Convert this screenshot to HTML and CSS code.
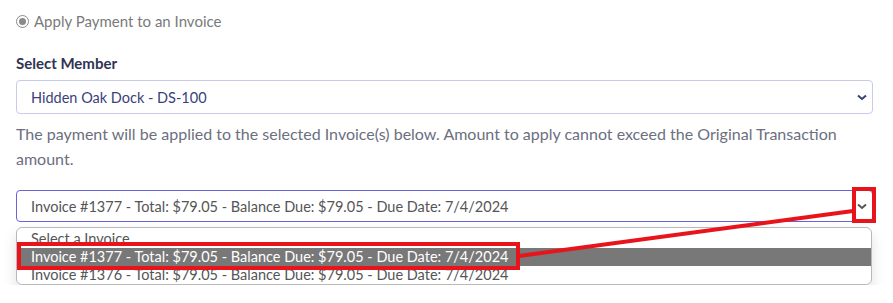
FILE: index.html
```html
<!DOCTYPE html>
<html lang="en">
<head>
    <meta charset="UTF-8">
    <title>Apply Payment</title>
    <link rel="stylesheet" href="styles.css">
</head>
<body>
    <div class="page">
        <!-- payment mode -->
        <label class="radio-row">
            <span class="radio"><span class="radio-dot"></span></span>
            Apply Payment to an Invoice
        </label>

        <div class="field-label">Select Member</div>
        <div class="select member-select">
            <span>Hidden Oak Dock - DS-100</span>
            <svg class="chev" width="10" height="7" viewBox="0 0 10 7"><path d="M1 1.5 L5 5 L9 1.5" fill="none" stroke="#3a3f7a" stroke-width="2"/></svg>
        </div>

        <p class="help">The payment will be applied to the selected Invoice(s) below. Amount to apply cannot exceed the Original Transaction amount.</p>

        <div class="invoice-wrap">
            <div class="select invoice-select">
                <span>Invoice #1377 - Total: $79.05 - Balance Due: $79.05 - Due Date: 7/4/2024</span>
                <svg class="chev" width="10" height="7" viewBox="0 0 10 7"><path d="M1 1.5 L5 5 L9 1.5" fill="none" stroke="#555" stroke-width="2"/></svg>
            </div>

            <!-- open dropdown -->
            <ul class="options">
                <li>Select a Invoice</li>
                <li class="active">Invoice #1377 - Total: $79.05 - Balance Due: $79.05 - Due Date: 7/4/2024</li>
                <li>Invoice #1376 - Total: $79.05 - Balance Due: $79.05 - Due Date: 7/4/2024</li>
            </ul>
        </div>
    </div>

    <!-- annotation overlay -->
    <div class="mark mark-chev"></div>
    <div class="mark mark-row"></div>
    <svg class="mark-line" width="893" height="303" viewBox="0 0 893 303">
        <line x1="519" y1="256" x2="853" y2="211" stroke="#e8141c" stroke-width="4"/>
    </svg>
</body>
</html>
```

FILE: styles.css
```css
body {
    margin: 0;
    font-family: Lato, "Open Sans", sans-serif;
    background-color: #fff;
    color: #6c6f80;
    font-size: 15px;
}
.page {
    padding: 12px 20px 0 16px;
}
.radio-row {
    display: flex;
    align-items: center;
    gap: 5px;
    color: #7a7a7a;
    height: 18px;
}
.radio {
    width: 11px;
    height: 11px;
    border: 1px solid #8a8a8a;
    border-radius: 50%;
    display: flex;
    align-items: center;
    justify-content: center;
}
.radio-dot {
    width: 7px;
    height: 7px;
    border-radius: 50%;
    background-color: #8a8a8a;
}
.field-label {
    margin-top: 24px;
    font-weight: bold;
    color: #2f3452;
    font-size: 15px;
}
.select {
    display: flex;
    align-items: center;
    justify-content: space-between;
    height: 32px;
    padding: 0 5px 0 14px;
    border: 1px solid #c8cbec;
    border-radius: 4px;
    background-color: #fff;
    font-size: 14.5px;
}
.member-select {
    margin-top: 8px;
    color: #3a3f7a;
}
.help {
    margin: 7px 0 0;
    line-height: 25px;
    color: #6c6f80;
    font-size: 16px;
    padding-right: 8px;
}
.invoice-wrap {
    margin-top: 19px;
}
.invoice-select {
    border-color: #6b63d8;
    color: #555;
    height: 30px;
}
.options {
    list-style: none;
    margin: 5px 1px 0 0;
    padding: 2px 0 0;
    border: 1px solid #b9b9b9;
    border-radius: 6px;
    background-color: #fff;
    box-shadow: 0 6px 14px rgba(0, 0, 0, 0.12);
    color: #555;
    font-size: 14.5px;
}
.options li {
    height: 18px;
    line-height: 18px;
    padding-left: 14px;
}
.options li.active {
    background-color: #787878;
    color: #fff;
}
.mark {
    position: absolute;
    border: 4px solid #e8141c;
}
.mark-chev {
    left: 852px;
    top: 187px;
    width: 16px;
    height: 28px;
}
.mark-row {
    left: 17px;
    top: 242px;
    width: 495px;
    height: 20px;
}
.mark-line {
    position: absolute;
    left: 0;
    top: 0;
    pointer-events: none;
}
```
